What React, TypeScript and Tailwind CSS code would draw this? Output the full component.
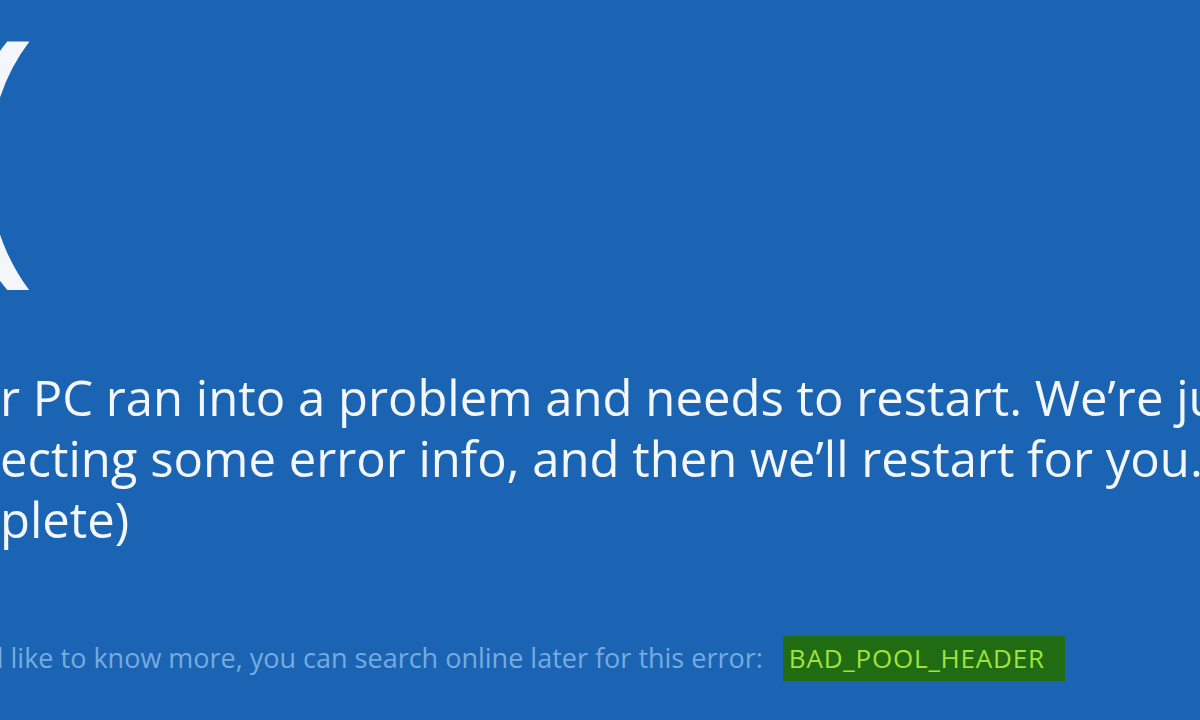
import type { ReactNode } from 'react';

// One line of the stop message. The start of the line is pushed past the left
// edge of the screen (the screenshot is a crop of a larger screen).
function Line({ hidden, children, className = '' }: { hidden: string; children: ReactNode; className?: string }) {
    return (
        <div className={`flex whitespace-nowrap ${className}`}>
            <span className="flex w-0 justify-end">
                <span>{hidden}</span>
            </span>
            <span>{children}</span>
        </div>
    );
}

export default function App() {
    return (
        <div
            className="w-[1200px] h-[720px] overflow-hidden bg-[#1b64b3] text-[#f3f6fb]"
            style={{ fontFamily: '"Open Sans", "Noto Sans", sans-serif' }}
        >
            {/* sad face */}
            <div className="flex h-[367px] text-[285px] leading-none">
                <span className="ml-[-46px] mt-[-8px]">(</span>
            </div>

            {/* main message */}
            <div className="text-[49px] leading-[61px]">
                <Line hidden="You">r PC ran into a problem and needs to restart. We’re just</Line>
                <Line hidden="coll">ecting some error info, and then we’ll restart for you.</Line>
                <Line hidden="(0% com">plete)</Line>
            </div>

            {/* stop code */}
            <div className="mt-[86px] flex items-center text-[27px]">
                <Line hidden="If you’" className="ml-[-13px] text-[#76abdf]">
                    d like to know more, you can search online later for this error:
                </Line>
                <div className="ml-[20px] flex h-[45px] w-[282px] shrink-0 items-center bg-[#1f6c12] px-[6px] text-[26px] tracking-[0.8px] text-[#a3e23e]">
                    BAD_POOL_HEADER
                </div>
            </div>
        </div>
    );
}
